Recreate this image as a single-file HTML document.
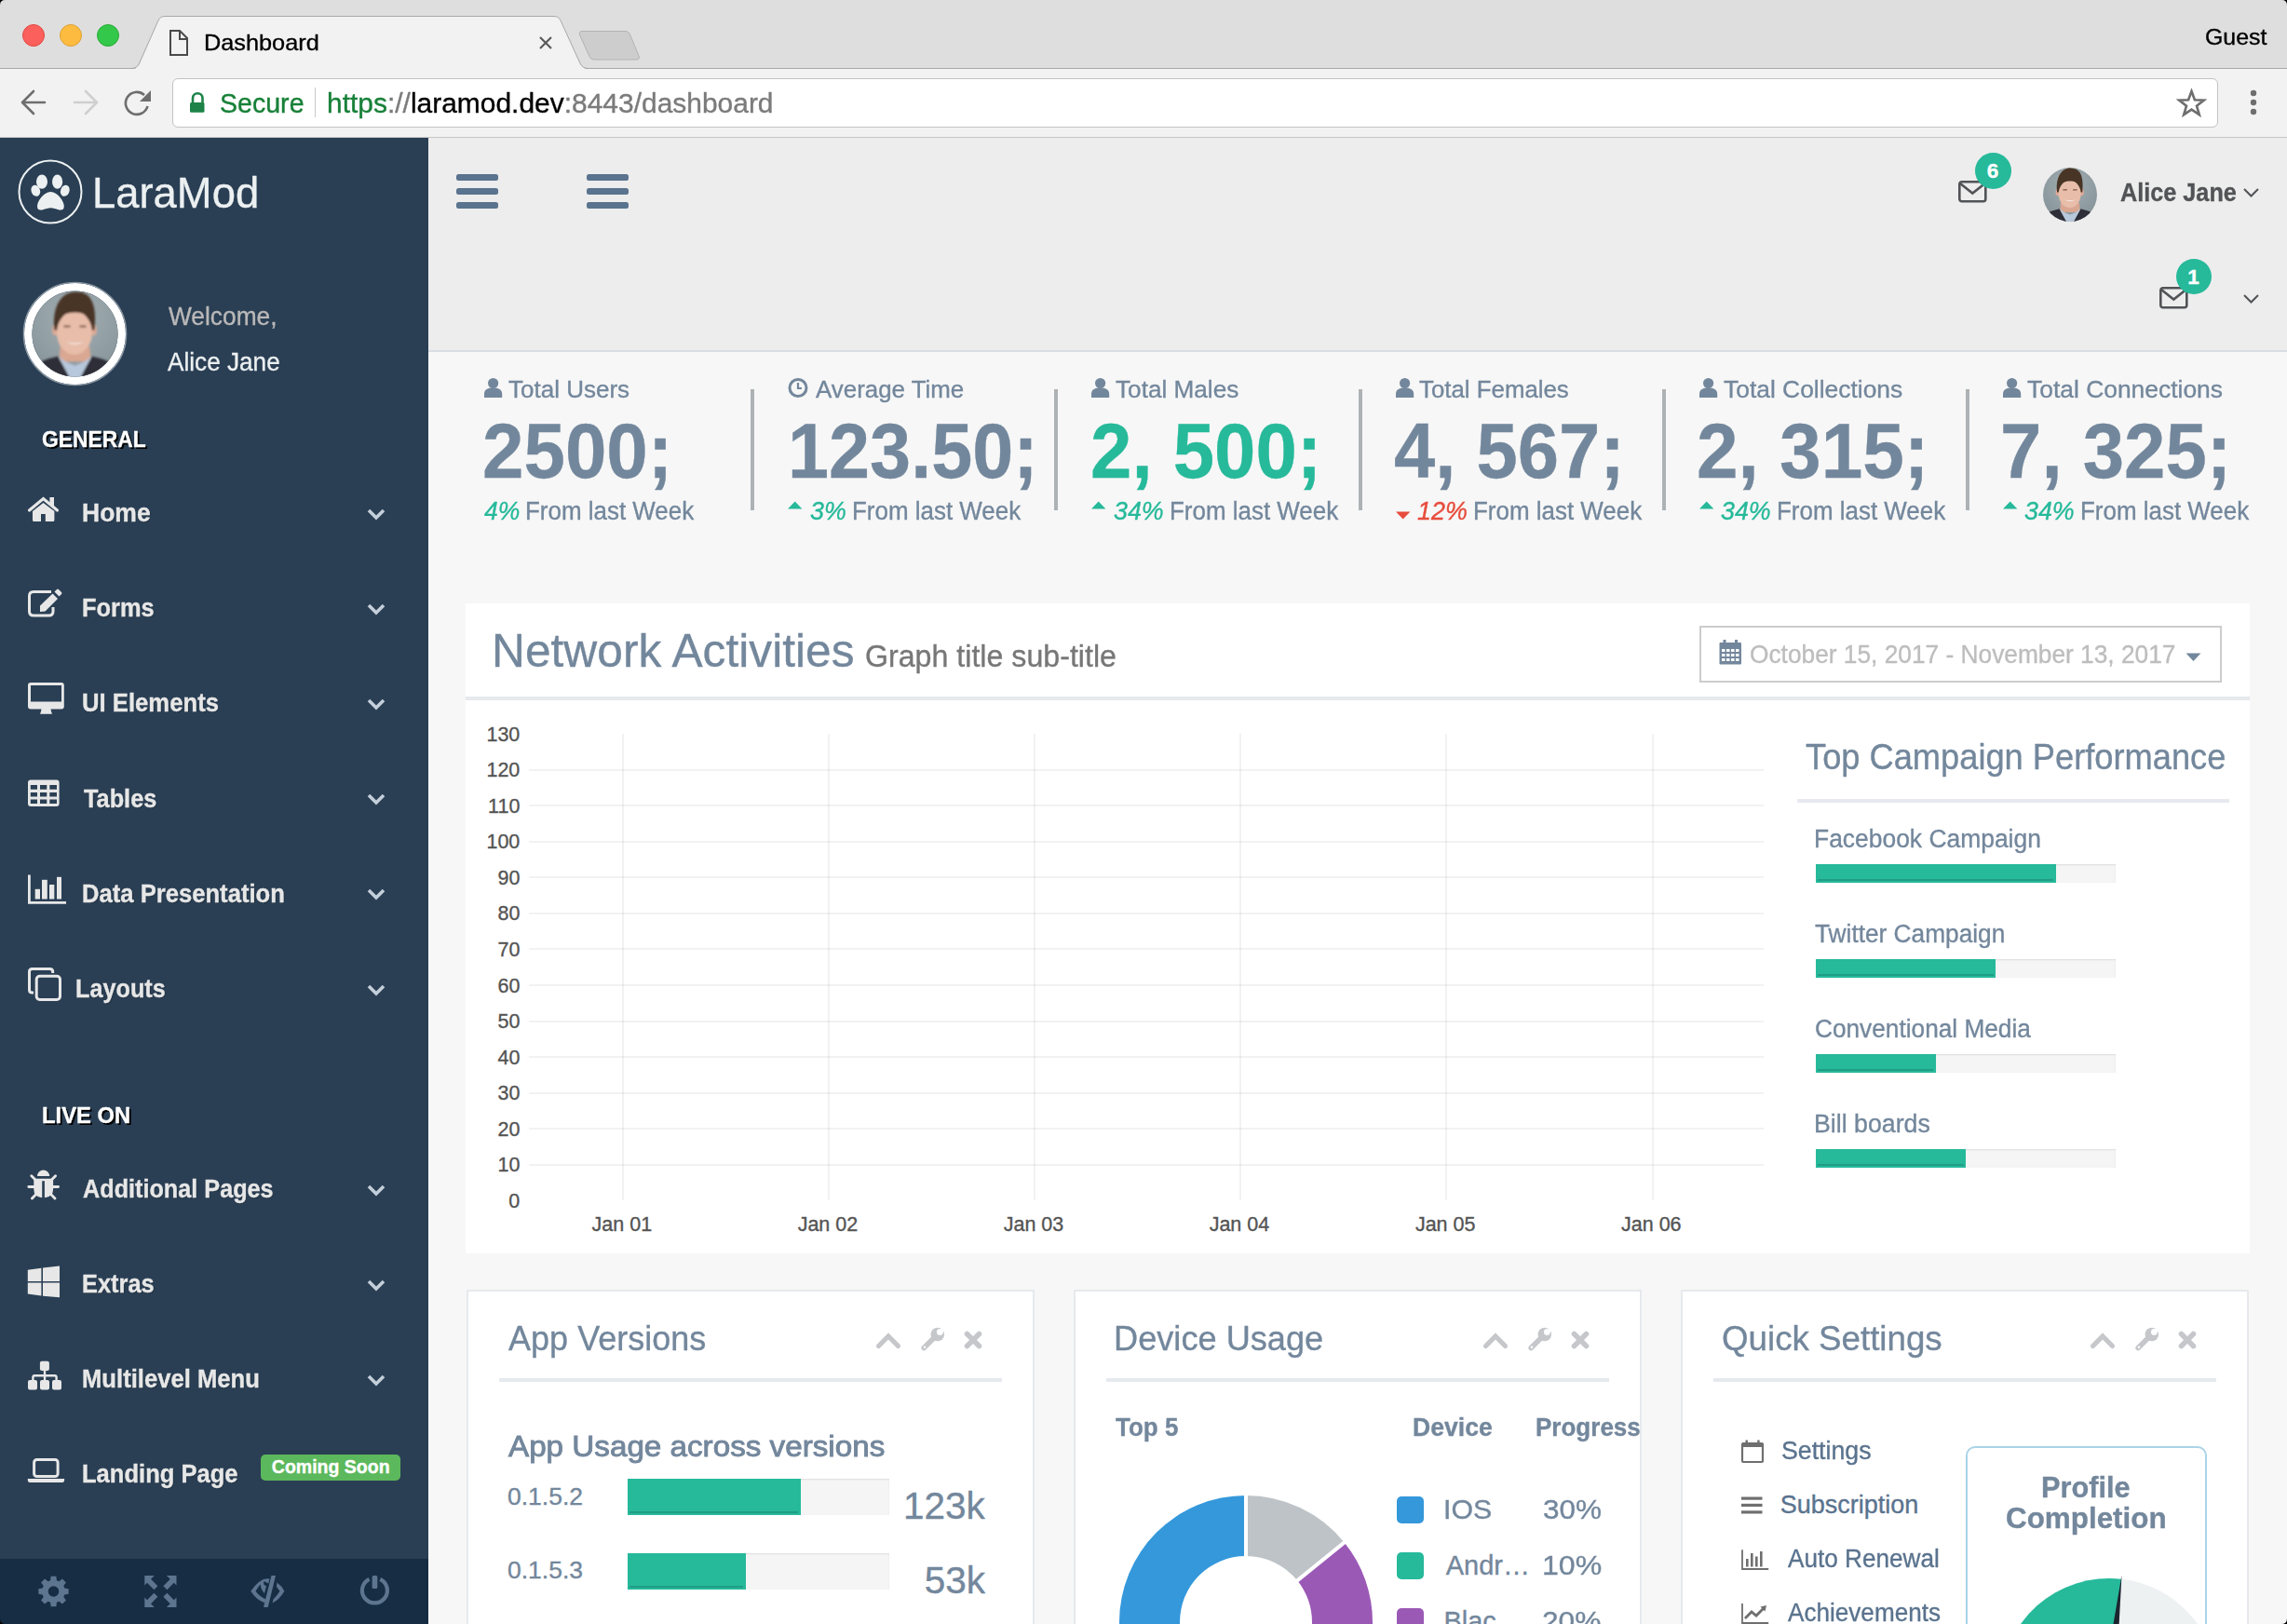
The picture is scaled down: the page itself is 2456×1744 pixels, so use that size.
<!DOCTYPE html>
<html><head><meta charset="utf-8"><title>Dashboard</title>
<style>
html,body{margin:0;padding:0;width:2456px;height:1744px;overflow:hidden;background:#F7F7F7}
body{position:relative;font-family:"Liberation Sans",sans-serif}
.abs{position:absolute}
.t{position:absolute;line-height:1;white-space:nowrap;-webkit-text-stroke:0.35px currentColor}
svg{overflow:visible}
</style></head><body>
<div class="abs" style="left:0;top:0;width:2456px;height:74px;background:#DEDEDE"></div><div class="abs" style="left:0;top:73px;width:2456px;height:1px;background:#A9A9A9"></div><div class="abs" style="left:0;top:74px;width:2456px;height:74px;background:#F2F2F2"></div><div class="abs" style="left:0;top:147px;width:2456px;height:1px;background:#C6C6C6"></div><svg class="abs" style="left:0;top:0" width="700" height="75">
<path d="M141,74.5 L144,74 Q148,73 150,69 L170,22 Q172,17.5 177,17.5 L595,17.5 Q600,17.5 602,22 L623,69 Q625,73 630,74 L700,74 L700,75 L0,75 L0,74 Z" fill="#F2F2F2"/>
<path d="M0,73.5 L141,73.5 Q147,73.5 149.5,68 L170,22 Q172,17.5 177,17.5 L595,17.5 Q600,17.5 602,22 L623,68 Q625.5,73.5 632,73.5 L700,73.5" fill="none" stroke="#A9A9A9" stroke-width="1"/>
<path d="M625,33.5 L672,33.5 Q675,33.5 676.5,37 L686,60 Q687.5,64 683.5,64 L637.5,64 Q634.5,64 633,60.5 L622.5,37.5 Q621.5,33.5 625,33.5 Z" fill="#CDCDCD" stroke="#B3B3B3" stroke-width="1"/>
<path d="M183,33 L193,33 L201,41 L201,59 L183,59 Z M193,33 L193,42 L201,42" fill="none" stroke="#4A4A4A" stroke-width="2"/>
<path d="M580,40 L592,52 M592,40 L580,52" stroke="#5A5A5A" stroke-width="2.2"/>
<circle cx="36" cy="38" r="11.5" fill="#FC605C" stroke="#E2463F" stroke-width="1"/>
<circle cx="76" cy="38" r="11.5" fill="#FDBC40" stroke="#DE9F34" stroke-width="1"/>
<circle cx="116" cy="38" r="11.5" fill="#34C84A" stroke="#27AA35" stroke-width="1"/>
</svg><div class="t" style="left:219.41px;top:33.50px;font-size:24px;color:#000;font-weight:400;font-style:normal;transform:scaleX(1.0537);transform-origin:0 0;">Dashboard</div><div class="t" style="left:2367.75px;top:28.00px;font-size:24px;color:#000;font-weight:400;font-style:normal;transform:scaleX(1.0377);transform-origin:0 0;">Guest</div><svg class="abs" style="left:0;top:74px" width="200" height="74">
<path d="M48,36 L25,36 M36,24 L24,36 L36,48" fill="none" stroke="#6E6E6E" stroke-width="2.6" stroke-linecap="round" stroke-linejoin="round"/>
<path d="M80,36 L103,36 M92,24 L104,36 L92,48" fill="none" stroke="#CFCFCF" stroke-width="2.6" stroke-linecap="round" stroke-linejoin="round"/>
<path d="M158.5,40 A12,12 0 1 1 155,28" fill="none" stroke="#6E6E6E" stroke-width="2.6"/>
<path d="M162,23 L162,35 L150,35 Z" fill="#6E6E6E"/>
</svg><div class="abs" style="left:185px;top:83.5px;width:2197px;height:53px;background:#fff;border:1px solid #C2C2C2;border-radius:6px;box-sizing:border-box"></div><svg class="abs" style="left:190px;top:90px" width="40" height="40">
<path d="M17,21 L17,15.5 A5.2,5.2 0 0 1 27.5,15.5 L27.5,21" fill="none" stroke="#1D8348" stroke-width="2.6"/>
<rect x="14" y="20" width="15.5" height="10.7" rx="1.5" fill="#1D8348"/>
</svg><div class="abs" style="left:338px;top:94px;width:1px;height:32px;background:#C8C8C8"></div><div class="t" style="left:235.71px;top:96.70px;font-size:29px;color:#188038;font-weight:400;font-style:normal;transform:scaleX(0.9852);transform-origin:0 0;">Secure</div><div class="t" style="left:350.90px;top:96.70px;font-size:29px;color:#000;font-weight:400;font-style:normal;transform:scaleX(1.0327);transform-origin:0 0;"><span style="color:#188038">https</span><span style="color:#7B7B7B">://</span><span style="color:#000">laramod.dev</span><span style="color:#7B7B7B">:8443/dashboard</span></div><svg class="abs" style="left:2330px;top:88px" width="110" height="44">
<path d="M23.5,10 L26.9,19.3 L36.8,19.6 L29,25.7 L31.8,35.2 L23.5,29.6 L15.2,35.2 L18,25.7 L10.2,19.6 L20.1,19.3 Z" fill="none" stroke="#6E6E6E" stroke-width="2.6" stroke-linejoin="miter"/>
<circle cx="90" cy="12" r="3.2" fill="#6E6E6E"/><circle cx="90" cy="22" r="3.2" fill="#6E6E6E"/><circle cx="90" cy="32" r="3.2" fill="#6E6E6E"/>
</svg><div class="abs" style="left:0;top:148px;width:460px;height:1596px;background:#2A3F54"></div><div class="abs" style="left:0;top:1674px;width:460px;height:70px;background:#172D44"></div><svg class="abs" style="left:0;top:148px" width="460" height="300">
<circle cx="54" cy="58" r="33.5" fill="none" stroke="#ECF0F1" stroke-width="2"/>
<g fill="#ECF0F1">
<ellipse cx="45" cy="47.2" rx="6" ry="7.6"/>
<ellipse cx="61.6" cy="47.2" rx="5.6" ry="7.6"/>
<ellipse cx="38.3" cy="56.8" rx="4.7" ry="6.2" transform="rotate(-20 38.3 56.8)"/>
<ellipse cx="69.8" cy="56.8" rx="4.7" ry="6.2" transform="rotate(20 69.8 56.8)"/>
<path d="M54.4,58 C47,58 40,68 40,73.5 C40,77.5 43,78 46,77.2 C49,76.3 51.5,75.2 54.4,75.2 C57.3,75.2 59.8,76.3 62.8,77.2 C65.8,78 68.8,77.5 68.8,73.5 C68.8,68 61.8,58 54.4,58 Z"/>
</g>
</svg><div class="t" style="left:98.75px;top:183.70px;font-size:46px;color:#ECF0F1;font-weight:400;font-style:normal;transform:scaleX(0.9868);transform-origin:0 0;">LaraMod</div><svg class="abs" style="left:22.5px;top:300.7px" width="115.0" height="115.0"><defs><clipPath id="cp80"><circle cx="57.5" cy="57.5" r="46"/></clipPath><radialGradient id="bg80" cx="0.5" cy="0.35" r="0.75"><stop offset="0" stop-color="#A3AFB3"/><stop offset="1" stop-color="#7E8C92"/></radialGradient><filter id="bl80" x="-10%" y="-10%" width="120%" height="120%"><feGaussianBlur stdDeviation="0.90"/></filter></defs><circle cx="57.5" cy="57.5" r="50.25" fill="none" stroke="#fff" stroke-width="8.5"/><circle cx="57.5" cy="57.5" r="55.1" fill="none" stroke="#8E9AA6" stroke-width="1.4"/><g clip-path="url(#cp80)"><rect x="0" y="0" width="115.0" height="115.0" fill="url(#bg80)"/><g transform="translate(57.5,57.5) scale(1.0000)" filter="url(#bl80)"><path d="M-16,14 L16,14 L17,30 L-17,30 Z" fill="#D9A792"/><path d="M-50,50 L-46,36 C-40,30 -30,27 -18,24 L-4,50 Z M50,50 L46,36 C40,30 30,27 18,24 L4,50 Z" fill="#2D2F37"/><path d="M-18,24 L-4,50 L4,50 L18,24 L10,30 L0,34 L-10,30 Z" fill="#B7C7DC"/><ellipse cx="-21" cy="-4" rx="3.5" ry="6" fill="#DDAA96"/><ellipse cx="20" cy="-4" rx="3.5" ry="6" fill="#DDAA96"/><path d="M-22,-4 C-25,-30 -14,-46 2,-45 C17,-45 24,-32 21,-4 Z" fill="#4A3527"/><ellipse cx="-0.5" cy="-1" rx="19" ry="23.5" fill="#E8BDA9"/><path d="M-19,-10 C-19,-22 -12,-28 0,-28 C12,-28 19,-22 19,-10 C16,-20 10,-23 0,-23 C-10,-23 -16,-20 -19,-10 Z" fill="#4A3527"/><path d="M-10,8 Q0,15 10,8 Q0,12 -10,8 Z" fill="#F4ECE6"/><path d="M-12,-8 L-5,-8 M5,-8 L12,-8" stroke="#7A5A48" stroke-width="2"/></g></g></svg><div class="t" style="left:180.87px;top:326.00px;font-size:27.5px;color:#BAB8B8;font-weight:400;font-style:normal;transform:scaleX(0.9568);transform-origin:0 0;">Welcome,</div><div class="t" style="left:180.43px;top:373.50px;font-size:28.5px;color:#ECF0F1;font-weight:400;font-style:normal;transform:scaleX(0.9180);transform-origin:0 0;">Alice Jane</div><div class="t" style="left:45.39px;top:461.00px;font-size:23px;color:#fff;font-weight:700;font-style:normal;transform:scaleX(0.9928);transform-origin:0 0;text-shadow:2px 2px 0 #000;">GENERAL</div><div class="t" style="left:44.69px;top:1186.50px;font-size:23px;color:#fff;font-weight:700;font-style:normal;transform:scaleX(1.0349);transform-origin:0 0;text-shadow:2px 2px 0 #000;">LIVE ON</div><div class="t" style="left:88.21px;top:538.00px;font-size:27px;color:#E7E7E7;font-weight:700;font-style:normal;transform:scaleX(0.9821);transform-origin:0 0;text-shadow:1px 1px 1px rgba(0,0,0,0.25);">Home</div><svg class="abs" style="left:393px;top:544.5px" width="22" height="16"><path d="M3,3 L11,11 L19,3" fill="none" stroke="#C4CFDA" stroke-width="3.6"/></svg><div class="t" style="left:88.28px;top:640.20px;font-size:27px;color:#E7E7E7;font-weight:700;font-style:normal;transform:scaleX(0.9424);transform-origin:0 0;text-shadow:1px 1px 1px rgba(0,0,0,0.25);">Forms</div><svg class="abs" style="left:393px;top:646.7px" width="22" height="16"><path d="M3,3 L11,11 L19,3" fill="none" stroke="#C4CFDA" stroke-width="3.6"/></svg><div class="t" style="left:88.46px;top:742.40px;font-size:27px;color:#E7E7E7;font-weight:700;font-style:normal;transform:scaleX(0.9512);transform-origin:0 0;text-shadow:1px 1px 1px rgba(0,0,0,0.25);">UI Elements</div><svg class="abs" style="left:393px;top:748.9px" width="22" height="16"><path d="M3,3 L11,11 L19,3" fill="none" stroke="#C4CFDA" stroke-width="3.6"/></svg><div class="t" style="left:89.75px;top:844.60px;font-size:27px;color:#E7E7E7;font-weight:700;font-style:normal;transform:scaleX(0.9373);transform-origin:0 0;text-shadow:1px 1px 1px rgba(0,0,0,0.25);">Tables</div><svg class="abs" style="left:393px;top:851.1px" width="22" height="16"><path d="M3,3 L11,11 L19,3" fill="none" stroke="#C4CFDA" stroke-width="3.6"/></svg><div class="t" style="left:88.27px;top:946.80px;font-size:27px;color:#E7E7E7;font-weight:700;font-style:normal;transform:scaleX(0.9490);transform-origin:0 0;text-shadow:1px 1px 1px rgba(0,0,0,0.25);">Data Presentation</div><svg class="abs" style="left:393px;top:953.3px" width="22" height="16"><path d="M3,3 L11,11 L19,3" fill="none" stroke="#C4CFDA" stroke-width="3.6"/></svg><div class="t" style="left:81.30px;top:1049.00px;font-size:27px;color:#E7E7E7;font-weight:700;font-style:normal;transform:scaleX(0.9346);transform-origin:0 0;text-shadow:1px 1px 1px rgba(0,0,0,0.25);">Layouts</div><svg class="abs" style="left:393px;top:1055.5px" width="22" height="16"><path d="M3,3 L11,11 L19,3" fill="none" stroke="#C4CFDA" stroke-width="3.6"/></svg><div class="t" style="left:89.37px;top:1264.00px;font-size:27px;color:#E7E7E7;font-weight:700;font-style:normal;transform:scaleX(0.9343);transform-origin:0 0;text-shadow:1px 1px 1px rgba(0,0,0,0.25);">Additional Pages</div><svg class="abs" style="left:393px;top:1270.5px" width="22" height="16"><path d="M3,3 L11,11 L19,3" fill="none" stroke="#C4CFDA" stroke-width="3.6"/></svg><div class="t" style="left:88.28px;top:1366.00px;font-size:27px;color:#E7E7E7;font-weight:700;font-style:normal;transform:scaleX(0.9416);transform-origin:0 0;text-shadow:1px 1px 1px rgba(0,0,0,0.25);">Extras</div><svg class="abs" style="left:393px;top:1372.5px" width="22" height="16"><path d="M3,3 L11,11 L19,3" fill="none" stroke="#C4CFDA" stroke-width="3.6"/></svg><div class="t" style="left:88.27px;top:1468.00px;font-size:27px;color:#E7E7E7;font-weight:700;font-style:normal;transform:scaleX(0.9497);transform-origin:0 0;text-shadow:1px 1px 1px rgba(0,0,0,0.25);">Multilevel Menu</div><svg class="abs" style="left:393px;top:1474.5px" width="22" height="16"><path d="M3,3 L11,11 L19,3" fill="none" stroke="#C4CFDA" stroke-width="3.6"/></svg><div class="t" style="left:88.27px;top:1570.00px;font-size:27px;color:#E7E7E7;font-weight:700;font-style:normal;transform:scaleX(0.9467);transform-origin:0 0;text-shadow:1px 1px 1px rgba(0,0,0,0.25);">Landing Page</div><div class="abs" style="left:280px;top:1562px;width:150px;height:28px;background:#5CB85C;border-radius:5px"></div><div class="t" style="left:291.82px;top:1566.00px;font-size:19.5px;color:#fff;font-weight:700;font-style:normal;">Coming Soon</div><div class="abs" style="left:460px;top:148px;width:1996px;height:228px;background:#EDEDED"></div><div class="abs" style="left:460px;top:376px;width:1996px;height:2px;background:#D9DEE4"></div><div class="abs" style="left:490px;top:186.7px;width:45px;height:7.5px;background:#5A738E;border-radius:2.5px"></div><div class="abs" style="left:490px;top:201.6px;width:45px;height:7.5px;background:#5A738E;border-radius:2.5px"></div><div class="abs" style="left:490px;top:216.6px;width:45px;height:7.5px;background:#5A738E;border-radius:2.5px"></div><div class="abs" style="left:630px;top:186.7px;width:45px;height:7.5px;background:#5A738E;border-radius:2.5px"></div><div class="abs" style="left:630px;top:201.6px;width:45px;height:7.5px;background:#5A738E;border-radius:2.5px"></div><div class="abs" style="left:630px;top:216.6px;width:45px;height:7.5px;background:#5A738E;border-radius:2.5px"></div><svg class="abs" style="left:2102.5px;top:194px" width="32" height="25"><rect x="1.3" y="1.3" width="28" height="21" rx="2.5" fill="none" stroke="#515356" stroke-width="2.6"/><path d="M2,3 L15.3,13.5 L28.6,3" fill="none" stroke="#515356" stroke-width="2.6"/></svg><div class="abs" style="left:2120.5px;top:163.5px;width:39px;height:39px;border-radius:50%;background:#26B99A"></div><div class="t" style="left:2133.76px;top:173.00px;font-size:22.5px;color:#fff;font-weight:700;font-style:normal;">6</div><svg class="abs" style="left:2191px;top:177px" width="64" height="64"><defs><clipPath id="cp2223"><circle cx="32" cy="32" r="29"/></clipPath><radialGradient id="bg2223" cx="0.5" cy="0.35" r="0.75"><stop offset="0" stop-color="#A3AFB3"/><stop offset="1" stop-color="#7E8C92"/></radialGradient><filter id="bl2223" x="-10%" y="-10%" width="120%" height="120%"><feGaussianBlur stdDeviation="0.57"/></filter></defs><g clip-path="url(#cp2223)"><rect x="0" y="0" width="64" height="64" fill="url(#bg2223)"/><g transform="translate(32,32) scale(0.6304)" filter="url(#bl2223)"><path d="M-16,14 L16,14 L17,30 L-17,30 Z" fill="#D9A792"/><path d="M-50,50 L-46,36 C-40,30 -30,27 -18,24 L-4,50 Z M50,50 L46,36 C40,30 30,27 18,24 L4,50 Z" fill="#2D2F37"/><path d="M-18,24 L-4,50 L4,50 L18,24 L10,30 L0,34 L-10,30 Z" fill="#B7C7DC"/><ellipse cx="-21" cy="-4" rx="3.5" ry="6" fill="#DDAA96"/><ellipse cx="20" cy="-4" rx="3.5" ry="6" fill="#DDAA96"/><path d="M-22,-4 C-25,-30 -14,-46 2,-45 C17,-45 24,-32 21,-4 Z" fill="#4A3527"/><ellipse cx="-0.5" cy="-1" rx="19" ry="23.5" fill="#E8BDA9"/><path d="M-19,-10 C-19,-22 -12,-28 0,-28 C12,-28 19,-22 19,-10 C16,-20 10,-23 0,-23 C-10,-23 -16,-20 -19,-10 Z" fill="#4A3527"/><path d="M-10,8 Q0,15 10,8 Q0,12 -10,8 Z" fill="#F4ECE6"/><path d="M-12,-8 L-5,-8 M5,-8 L12,-8" stroke="#7A5A48" stroke-width="2"/></g></g></svg><div class="t" style="left:2277.37px;top:193.00px;font-size:27.5px;color:#515356;font-weight:700;font-style:normal;transform:scaleX(0.9176);transform-origin:0 0;">Alice Jane</div><svg class="abs" style="left:2408px;top:200px" width="20" height="14"><path d="M2,3 L9.5,10.5 L17,3" fill="none" stroke="#515356" stroke-width="2"/></svg><svg class="abs" style="left:2318.5px;top:308.3px" width="32" height="25"><rect x="1.3" y="1.3" width="28" height="21" rx="2.5" fill="none" stroke="#515356" stroke-width="2.6"/><path d="M2,3 L15.3,13.5 L28.6,3" fill="none" stroke="#515356" stroke-width="2.6"/></svg><div class="abs" style="left:2336.75px;top:277.75px;width:38.5px;height:38.5px;border-radius:50%;background:#26B99A"></div><div class="t" style="left:2349.33px;top:287.00px;font-size:22.5px;color:#fff;font-weight:700;font-style:normal;">1</div><svg class="abs" style="left:2408px;top:314px" width="20" height="14"><path d="M2,3 L9.5,10.5 L17,3" fill="none" stroke="#515356" stroke-width="2"/></svg><svg class="abs" style="left:520.0px;top:405px" width="22" height="24"><circle cx="9.6" cy="6.5" r="5.6" fill="#73879C"/><path d="M0,22 L0,18 C0,13 4,11.5 9.6,11.5 C15,11.5 19.2,13 19.2,18 L19.2,22 Z" fill="#73879C"/></svg><div class="t" style="left:545.71px;top:404.50px;font-size:26.5px;color:#73879C;font-weight:400;font-style:normal;transform:scaleX(0.9814);transform-origin:0 0;">Total Users</div><div class="t" style="left:518.40px;top:443.00px;font-size:83px;color:#73879C;font-weight:700;font-style:normal;transform:scaleX(0.9629);transform-origin:0 0;">2500;</div><div class="t" style="left:519.80px;top:535.50px;font-size:27px;color:#26B99A;font-weight:400;font-style:italic;transform:scaleX(0.9823);transform-origin:0 0;">4%</div><div class="t" style="left:564.36px;top:535.50px;font-size:27px;color:#73879C;font-weight:400;font-style:normal;transform:scaleX(0.9608);transform-origin:0 0;">From last Week</div><div class="abs" style="left:806.2px;top:418px;width:4px;height:130px;background:#ADB2B5"></div><svg class="abs" style="left:846.2px;top:405px" width="24" height="24"><circle cx="11" cy="11.5" r="9" fill="none" stroke="#73879C" stroke-width="3"/><path d="M11,6 L11,12 L15,12" fill="none" stroke="#73879C" stroke-width="2.2"/></svg><div class="t" style="left:875.84px;top:404.50px;font-size:26.5px;color:#73879C;font-weight:400;font-style:normal;transform:scaleX(0.9766);transform-origin:0 0;">Average Time</div><div class="t" style="left:846.05px;top:443.00px;font-size:83px;color:#73879C;font-weight:700;font-style:normal;transform:scaleX(0.9542);transform-origin:0 0;">123.50;</div><svg class="abs" style="left:846.2px;top:538px" width="16" height="10"><path d="M0,8.5 L7.7,0.5 L15.4,8.5 Z" fill="#26B99A"/></svg><div class="t" style="left:869.60px;top:535.50px;font-size:27px;color:#26B99A;font-weight:400;font-style:italic;transform:scaleX(0.9930);transform-origin:0 0;">3%</div><div class="t" style="left:914.56px;top:535.50px;font-size:27px;color:#73879C;font-weight:400;font-style:normal;transform:scaleX(0.9608);transform-origin:0 0;">From last Week</div><div class="abs" style="left:1132.4px;top:418px;width:4px;height:130px;background:#ADB2B5"></div><svg class="abs" style="left:1172.4px;top:405px" width="22" height="24"><circle cx="9.6" cy="6.5" r="5.6" fill="#73879C"/><path d="M0,22 L0,18 C0,13 4,11.5 9.6,11.5 C15,11.5 19.2,13 19.2,18 L19.2,22 Z" fill="#73879C"/></svg><div class="t" style="left:1198.11px;top:404.50px;font-size:26.5px;color:#73879C;font-weight:400;font-style:normal;transform:scaleX(0.9872);transform-origin:0 0;">Total Males</div><div class="t" style="left:1170.61px;top:443.00px;font-size:83px;color:#26B99A;font-weight:700;font-style:normal;transform:scaleX(0.9614);transform-origin:0 0;">2, 500;</div><svg class="abs" style="left:1172.4px;top:538px" width="16" height="10"><path d="M0,8.5 L7.7,0.5 L15.4,8.5 Z" fill="#26B99A"/></svg><div class="t" style="left:1195.80px;top:535.50px;font-size:27px;color:#26B99A;font-weight:400;font-style:italic;transform:scaleX(0.9940);transform-origin:0 0;">34%</div><div class="t" style="left:1255.76px;top:535.50px;font-size:27px;color:#73879C;font-weight:400;font-style:normal;transform:scaleX(0.9608);transform-origin:0 0;">From last Week</div><div class="abs" style="left:1458.6px;top:418px;width:4px;height:130px;background:#ADB2B5"></div><svg class="abs" style="left:1498.6px;top:405px" width="22" height="24"><circle cx="9.6" cy="6.5" r="5.6" fill="#73879C"/><path d="M0,22 L0,18 C0,13 4,11.5 9.6,11.5 C15,11.5 19.2,13 19.2,18 L19.2,22 Z" fill="#73879C"/></svg><div class="t" style="left:1524.32px;top:404.50px;font-size:26.5px;color:#73879C;font-weight:400;font-style:normal;transform:scaleX(0.9747);transform-origin:0 0;">Total Females</div><div class="t" style="left:1497.31px;top:443.00px;font-size:83px;color:#73879C;font-weight:700;font-style:normal;transform:scaleX(0.9590);transform-origin:0 0;">4, 567;</div><svg class="abs" style="left:1498.6px;top:549px" width="16" height="10"><path d="M0,0.5 L7.7,8.5 L15.4,0.5 Z" fill="#E74C3C"/></svg><div class="t" style="left:1521.93px;top:535.50px;font-size:27px;color:#E74C3C;font-weight:400;font-style:italic;transform:scaleX(0.9953);transform-origin:0 0;">12%</div><div class="t" style="left:1581.96px;top:535.50px;font-size:27px;color:#73879C;font-weight:400;font-style:normal;transform:scaleX(0.9608);transform-origin:0 0;">From last Week</div><div class="abs" style="left:1784.8px;top:418px;width:4px;height:130px;background:#ADB2B5"></div><svg class="abs" style="left:1824.8px;top:405px" width="22" height="24"><circle cx="9.6" cy="6.5" r="5.6" fill="#73879C"/><path d="M0,22 L0,18 C0,13 4,11.5 9.6,11.5 C15,11.5 19.2,13 19.2,18 L19.2,22 Z" fill="#73879C"/></svg><div class="t" style="left:1850.51px;top:404.50px;font-size:26.5px;color:#73879C;font-weight:400;font-style:normal;transform:scaleX(0.9960);transform-origin:0 0;">Total Collections</div><div class="t" style="left:1821.50px;top:443.00px;font-size:83px;color:#73879C;font-weight:700;font-style:normal;transform:scaleX(0.9655);transform-origin:0 0;">2, 315;</div><svg class="abs" style="left:1824.8px;top:538px" width="16" height="10"><path d="M0,8.5 L7.7,0.5 L15.4,8.5 Z" fill="#26B99A"/></svg><div class="t" style="left:1848.20px;top:535.50px;font-size:27px;color:#26B99A;font-weight:400;font-style:italic;transform:scaleX(0.9940);transform-origin:0 0;">34%</div><div class="t" style="left:1908.16px;top:535.50px;font-size:27px;color:#73879C;font-weight:400;font-style:normal;transform:scaleX(0.9608);transform-origin:0 0;">From last Week</div><div class="abs" style="left:2111.0px;top:418px;width:4px;height:130px;background:#ADB2B5"></div><svg class="abs" style="left:2151.0px;top:405px" width="22" height="24"><circle cx="9.6" cy="6.5" r="5.6" fill="#73879C"/><path d="M0,22 L0,18 C0,13 4,11.5 9.6,11.5 C15,11.5 19.2,13 19.2,18 L19.2,22 Z" fill="#73879C"/></svg><div class="t" style="left:2176.71px;top:404.50px;font-size:26.5px;color:#73879C;font-weight:400;font-style:normal;transform:scaleX(0.9969);transform-origin:0 0;">Total Connections</div><div class="t" style="left:2147.61px;top:443.00px;font-size:83px;color:#73879C;font-weight:700;font-style:normal;transform:scaleX(0.9614);transform-origin:0 0;">7, 325;</div><svg class="abs" style="left:2151.0px;top:538px" width="16" height="10"><path d="M0,8.5 L7.7,0.5 L15.4,8.5 Z" fill="#26B99A"/></svg><div class="t" style="left:2174.40px;top:535.50px;font-size:27px;color:#26B99A;font-weight:400;font-style:italic;transform:scaleX(0.9940);transform-origin:0 0;">34%</div><div class="t" style="left:2234.36px;top:535.50px;font-size:27px;color:#73879C;font-weight:400;font-style:normal;transform:scaleX(0.9608);transform-origin:0 0;">From last Week</div><div class="abs" style="left:500px;top:648px;width:1916px;height:698px;background:#fff"></div><div class="abs" style="left:500px;top:748px;width:1916px;height:4px;background:#E6E9ED"></div><div class="t" style="left:527.60px;top:674.20px;font-size:50px;color:#73879C;font-weight:400;font-style:normal;transform:scaleX(0.9944);transform-origin:0 0;">Network Activities</div><div class="t" style="left:928.79px;top:688.20px;font-size:33px;color:#777;font-weight:400;font-style:normal;transform:scaleX(0.9748);transform-origin:0 0;">Graph title sub-title</div><div class="abs" style="left:1824.5px;top:672.3px;width:561px;height:61px;border:2px solid #CCC;box-sizing:border-box;background:#fff"></div><svg class="abs" style="left:1846px;top:686px" width="26" height="30">
<rect x="0.5" y="4" width="23.5" height="23.5" rx="1" fill="#73879C"/>
<rect x="4.5" y="1" width="3" height="6" fill="#73879C"/><rect x="17" y="1" width="3" height="6" fill="#73879C"/>
<g fill="#fff">
<rect x="3" y="11" width="3.5" height="3"/><rect x="8" y="11" width="3.5" height="3"/><rect x="13" y="11" width="3.5" height="3"/><rect x="18" y="11" width="3.5" height="3"/>
<rect x="3" y="16" width="3.5" height="3"/><rect x="8" y="16" width="3.5" height="3"/><rect x="13" y="16" width="3.5" height="3"/><rect x="18" y="16" width="3.5" height="3"/>
<rect x="3" y="21" width="3.5" height="3"/><rect x="8" y="21" width="3.5" height="3"/><rect x="13" y="21" width="3.5" height="3"/><rect x="18" y="21" width="3.5" height="3"/>
</g></svg><div class="t" style="left:1878.95px;top:689.00px;font-size:28px;color:#BDBDBD;font-weight:400;font-style:normal;transform:scaleX(0.9390);transform-origin:0 0;">October 15, 2017 - November 13, 2017</div><svg class="abs" style="left:2347px;top:700px" width="18" height="12"><path d="M0.5,1.5 L16.5,1.5 L8.5,10 Z" fill="#73879C"/></svg><div class="abs" style="left:568px;top:825.6px;width:1326px;height:2px;background:rgba(0,0,0,0.05)"></div><div class="abs" style="left:568px;top:864.1px;width:1326px;height:2px;background:rgba(0,0,0,0.05)"></div><div class="abs" style="left:568px;top:902.7px;width:1326px;height:2px;background:rgba(0,0,0,0.05)"></div><div class="abs" style="left:568px;top:941.2px;width:1326px;height:2px;background:rgba(0,0,0,0.05)"></div><div class="abs" style="left:568px;top:979.8px;width:1326px;height:2px;background:rgba(0,0,0,0.05)"></div><div class="abs" style="left:568px;top:1018.4px;width:1326px;height:2px;background:rgba(0,0,0,0.05)"></div><div class="abs" style="left:568px;top:1056.9px;width:1326px;height:2px;background:rgba(0,0,0,0.05)"></div><div class="abs" style="left:568px;top:1095.5px;width:1326px;height:2px;background:rgba(0,0,0,0.05)"></div><div class="abs" style="left:568px;top:1134.1px;width:1326px;height:2px;background:rgba(0,0,0,0.05)"></div><div class="abs" style="left:568px;top:1172.6px;width:1326px;height:2px;background:rgba(0,0,0,0.05)"></div><div class="abs" style="left:568px;top:1211.2px;width:1326px;height:2px;background:rgba(0,0,0,0.05)"></div><div class="abs" style="left:568px;top:1249.7px;width:1326px;height:2px;background:rgba(0,0,0,0.05)"></div><div class="abs" style="left:668.0px;top:788px;width:2px;height:501px;background:rgba(0,0,0,0.05)"></div><div class="abs" style="left:889.1px;top:788px;width:2px;height:501px;background:rgba(0,0,0,0.05)"></div><div class="abs" style="left:1110.2px;top:788px;width:2px;height:501px;background:rgba(0,0,0,0.05)"></div><div class="abs" style="left:1331.3px;top:788px;width:2px;height:501px;background:rgba(0,0,0,0.05)"></div><div class="abs" style="left:1552.4px;top:788px;width:2px;height:501px;background:rgba(0,0,0,0.05)"></div><div class="abs" style="left:1773.5px;top:788px;width:2px;height:501px;background:rgba(0,0,0,0.05)"></div><div class="t" style="left:522.46px;top:778.60px;font-size:21.5px;color:#545454;font-weight:400;font-style:normal;">130</div><div class="t" style="left:522.46px;top:817.16px;font-size:21.5px;color:#545454;font-weight:400;font-style:normal;">120</div><div class="t" style="left:524.07px;top:855.72px;font-size:21.5px;color:#545454;font-weight:400;font-style:normal;">110</div><div class="t" style="left:522.46px;top:894.28px;font-size:21.5px;color:#545454;font-weight:400;font-style:normal;">100</div><div class="t" style="left:534.44px;top:932.85px;font-size:21.5px;color:#545454;font-weight:400;font-style:normal;">90</div><div class="t" style="left:534.44px;top:971.41px;font-size:21.5px;color:#545454;font-weight:400;font-style:normal;">80</div><div class="t" style="left:534.44px;top:1009.97px;font-size:21.5px;color:#545454;font-weight:400;font-style:normal;">70</div><div class="t" style="left:534.44px;top:1048.53px;font-size:21.5px;color:#545454;font-weight:400;font-style:normal;">60</div><div class="t" style="left:534.44px;top:1087.09px;font-size:21.5px;color:#545454;font-weight:400;font-style:normal;">50</div><div class="t" style="left:534.44px;top:1125.65px;font-size:21.5px;color:#545454;font-weight:400;font-style:normal;">40</div><div class="t" style="left:534.44px;top:1164.22px;font-size:21.5px;color:#545454;font-weight:400;font-style:normal;">30</div><div class="t" style="left:534.44px;top:1202.78px;font-size:21.5px;color:#545454;font-weight:400;font-style:normal;">20</div><div class="t" style="left:534.44px;top:1241.34px;font-size:21.5px;color:#545454;font-weight:400;font-style:normal;">10</div><div class="t" style="left:546.37px;top:1279.90px;font-size:21.5px;color:#545454;font-weight:400;font-style:normal;">0</div><div class="t" style="left:635.57px;top:1305.10px;font-size:21.5px;color:#545454;font-weight:400;font-style:normal;">Jan 01</div><div class="t" style="left:856.67px;top:1305.10px;font-size:21.5px;color:#545454;font-weight:400;font-style:normal;">Jan 02</div><div class="t" style="left:1077.72px;top:1305.10px;font-size:21.5px;color:#545454;font-weight:400;font-style:normal;">Jan 03</div><div class="t" style="left:1298.66px;top:1305.10px;font-size:21.5px;color:#545454;font-weight:400;font-style:normal;">Jan 04</div><div class="t" style="left:1519.89px;top:1305.10px;font-size:21.5px;color:#545454;font-weight:400;font-style:normal;">Jan 05</div><div class="t" style="left:1741.02px;top:1305.10px;font-size:21.5px;color:#545454;font-weight:400;font-style:normal;">Jan 06</div><div class="t" style="left:1939.18px;top:794.30px;font-size:38.5px;color:#73879C;font-weight:400;font-style:normal;transform:scaleX(0.9417);transform-origin:0 0;">Top Campaign Performance</div><div class="abs" style="left:1930px;top:858px;width:464px;height:4px;background:#E6E9ED"></div><div class="t" style="left:1947.82px;top:888.40px;font-size:27px;color:#73879C;font-weight:400;font-style:normal;transform:scaleX(0.9787);transform-origin:0 0;">Facebook Campaign</div><div class="abs" style="left:1950px;top:928px;width:322px;height:20px;background:#F5F5F5;box-shadow:inset 0 1px 2px rgba(0,0,0,0.1)"></div><div class="abs" style="left:1950px;top:928px;width:257.6px;height:20px;background:#26B99A"></div><div class="abs" style="left:1952px;top:944px;width:253.1px;height:2px;background:rgba(0,0,0,0.15)"></div><div class="t" style="left:1949.41px;top:990.20px;font-size:27px;color:#73879C;font-weight:400;font-style:normal;transform:scaleX(0.9723);transform-origin:0 0;">Twitter Campaign</div><div class="abs" style="left:1950px;top:1030px;width:322px;height:20px;background:#F5F5F5;box-shadow:inset 0 1px 2px rgba(0,0,0,0.1)"></div><div class="abs" style="left:1950px;top:1030px;width:193.2px;height:20px;background:#26B99A"></div><div class="abs" style="left:1952px;top:1046px;width:188.7px;height:2px;background:rgba(0,0,0,0.15)"></div><div class="t" style="left:1948.69px;top:1092.00px;font-size:27px;color:#73879C;font-weight:400;font-style:normal;transform:scaleX(0.9716);transform-origin:0 0;">Conventional Media</div><div class="abs" style="left:1950px;top:1132px;width:322px;height:20px;background:#F5F5F5;box-shadow:inset 0 1px 2px rgba(0,0,0,0.1)"></div><div class="abs" style="left:1950px;top:1132px;width:128.8px;height:20px;background:#26B99A"></div><div class="abs" style="left:1952px;top:1148px;width:124.3px;height:2px;background:rgba(0,0,0,0.15)"></div><div class="t" style="left:1947.79px;top:1193.80px;font-size:27px;color:#73879C;font-weight:400;font-style:normal;transform:scaleX(0.9901);transform-origin:0 0;">Bill boards</div><div class="abs" style="left:1950px;top:1234px;width:322px;height:20px;background:#F5F5F5;box-shadow:inset 0 1px 2px rgba(0,0,0,0.1)"></div><div class="abs" style="left:1950px;top:1234px;width:161.0px;height:20px;background:#26B99A"></div><div class="abs" style="left:1952px;top:1250px;width:156.5px;height:2px;background:rgba(0,0,0,0.15)"></div><div class="abs" style="left:500.7px;top:1385px;width:610.3px;height:400px;background:#fff;border:2px solid #E6E9ED;box-sizing:border-box"></div><div class="t" style="left:545.91px;top:1419.00px;font-size:37.5px;color:#73879C;font-weight:400;font-style:normal;transform:scaleX(0.9610);transform-origin:0 0;">App Versions</div><div class="abs" style="left:535.7px;top:1480px;width:540.3px;height:4px;background:#E6E9ED"></div><svg class="abs" style="left:0;top:0" width="2456" height="1744"><path d="M943.5,1445.5 L954,1435 L964.5,1445.5" fill="none" stroke="#C5C7CB" stroke-width="5.2" stroke-linecap="round" stroke-linejoin="miter"/><mask id="wm941"><rect x="986.8" y="1413" width="40" height="40" fill="#fff"/><circle cx="1009.4" cy="1430.4" r="3.4" fill="#000"/><path d="M1009.4,1430.4 L1015.8,1421 L1019.8,1429 Z" fill="#000"/></mask><g mask="url(#wm941)"><circle cx="1006.8" cy="1433" r="7.3" fill="#C5C7CB"/></g><line x1="1003.8" y1="1436" x2="992.1999999999999" y2="1447.6" stroke="#C5C7CB" stroke-width="5.6" stroke-linecap="round"/><circle cx="993.0" cy="1446.8" r="1.2" fill="#fff"/><path d="M1038.5,1432.5 L1051.5,1445.5 M1051.5,1432.5 L1038.5,1445.5" stroke="#C5C7CB" stroke-width="5.6" stroke-linecap="round"/></svg><div class="abs" style="left:1153px;top:1385px;width:609.5999999999999px;height:400px;background:#fff;border:2px solid #E6E9ED;box-sizing:border-box"></div><div class="t" style="left:1196.32px;top:1419.00px;font-size:37.5px;color:#73879C;font-weight:400;font-style:normal;transform:scaleX(0.9648);transform-origin:0 0;">Device Usage</div><div class="abs" style="left:1188px;top:1480px;width:539.5999999999999px;height:4px;background:#E6E9ED"></div><svg class="abs" style="left:0;top:0" width="2456" height="1744"><path d="M1595.5,1445.5 L1606,1435 L1616.5,1445.5" fill="none" stroke="#C5C7CB" stroke-width="5.2" stroke-linecap="round" stroke-linejoin="miter"/><mask id="wm1593"><rect x="1638.8" y="1413" width="40" height="40" fill="#fff"/><circle cx="1661.3999999999999" cy="1430.4" r="3.4" fill="#000"/><path d="M1661.3999999999999,1430.4 L1667.8,1421 L1671.8,1429 Z" fill="#000"/></mask><g mask="url(#wm1593)"><circle cx="1658.8" cy="1433" r="7.3" fill="#C5C7CB"/></g><line x1="1655.8" y1="1436" x2="1644.2" y2="1447.6" stroke="#C5C7CB" stroke-width="5.6" stroke-linecap="round"/><circle cx="1645.0" cy="1446.8" r="1.2" fill="#fff"/><path d="M1690.5,1432.5 L1703.5,1445.5 M1703.5,1432.5 L1690.5,1445.5" stroke="#C5C7CB" stroke-width="5.6" stroke-linecap="round"/></svg><div class="abs" style="left:1805px;top:1385px;width:609.5999999999999px;height:400px;background:#fff;border:2px solid #E6E9ED;box-sizing:border-box"></div><div class="t" style="left:1849.26px;top:1419.00px;font-size:37.5px;color:#73879C;font-weight:400;font-style:normal;transform:scaleX(0.9791);transform-origin:0 0;">Quick Settings</div><div class="abs" style="left:1840px;top:1480px;width:539.5999999999999px;height:4px;background:#E6E9ED"></div><svg class="abs" style="left:0;top:0" width="2456" height="1744"><path d="M2247.5,1445.5 L2258,1435 L2268.5,1445.5" fill="none" stroke="#C5C7CB" stroke-width="5.2" stroke-linecap="round" stroke-linejoin="miter"/><mask id="wm2245"><rect x="2290.8" y="1413" width="40" height="40" fill="#fff"/><circle cx="2313.4" cy="1430.4" r="3.4" fill="#000"/><path d="M2313.4,1430.4 L2319.8,1421 L2323.8,1429 Z" fill="#000"/></mask><g mask="url(#wm2245)"><circle cx="2310.8" cy="1433" r="7.3" fill="#C5C7CB"/></g><line x1="2307.8" y1="1436" x2="2296.2000000000003" y2="1447.6" stroke="#C5C7CB" stroke-width="5.6" stroke-linecap="round"/><circle cx="2297.0" cy="1446.8" r="1.2" fill="#fff"/><path d="M2342.5,1432.5 L2355.5,1445.5 M2355.5,1432.5 L2342.5,1445.5" stroke="#C5C7CB" stroke-width="5.6" stroke-linecap="round"/></svg><div class="t" style="left:545.92px;top:1538.00px;font-size:31.5px;color:#73879C;font-weight:400;font-style:normal;transform:scaleX(1.0543);transform-origin:0 0;-webkit-text-stroke:0.9px #73879C;">App Usage across versions</div><div class="t" style="left:545.00px;top:1593.70px;font-size:26.5px;color:#73879C;font-weight:400;font-style:normal;">0.1.5.2</div><div class="abs" style="left:674px;top:1587.8px;width:281px;height:39px;background:#F5F5F5;box-shadow:inset 0 1px 2px rgba(0,0,0,0.1)"></div><div class="abs" style="left:674px;top:1587.8px;width:185.5px;height:39px;background:#26B99A"></div><div class="abs" style="left:676px;top:1622.8px;width:181.0px;height:2px;background:rgba(0,0,0,0.15)"></div><div class="t" style="left:969.95px;top:1597.00px;font-size:40.5px;color:#73879C;font-weight:400;font-style:normal;">123k</div><div class="t" style="left:545.01px;top:1673.20px;font-size:26.5px;color:#73879C;font-weight:400;font-style:normal;">0.1.5.3</div><div class="abs" style="left:674px;top:1667.7px;width:281px;height:39px;background:#F5F5F5;box-shadow:inset 0 1px 2px rgba(0,0,0,0.1)"></div><div class="abs" style="left:674px;top:1667.7px;width:126.5px;height:39px;background:#26B99A"></div><div class="abs" style="left:676px;top:1702.7px;width:122.0px;height:2px;background:rgba(0,0,0,0.15)"></div><div class="t" style="left:992.69px;top:1677.00px;font-size:40.5px;color:#73879C;font-weight:400;font-style:normal;">53k</div><div class="t" style="left:1197.54px;top:1519.80px;font-size:27px;color:#73879C;font-weight:700;font-style:normal;transform:scaleX(0.9625);transform-origin:0 0;">Top 5</div><div class="t" style="left:1516.91px;top:1519.80px;font-size:27px;color:#73879C;font-weight:700;font-style:normal;transform:scaleX(0.9845);transform-origin:0 0;">Device</div><div class="t" style="left:1648.64px;top:1519.80px;font-size:27px;color:#73879C;font-weight:700;font-style:normal;transform:scaleX(0.9637);transform-origin:0 0;">Progress</div><svg class="abs" style="left:0;top:0" width="2456" height="1744"><path d="M1338.00,1878.00 A136,136 0 0 1 1338.00,1606.00 L1338.00,1671.00 A71,71 0 0 0 1338.00,1813.00 Z" fill="#3498DB"/><path d="M1338.00,1606.00 A136,136 0 0 1 1443.69,1656.41 L1393.18,1697.32 A71,71 0 0 0 1338.00,1671.00 Z" fill="#BDC3C7"/><path d="M1443.69,1656.41 A136,136 0 0 1 1442.18,1829.42 L1392.39,1787.64 A71,71 0 0 0 1393.18,1697.32 Z" fill="#9B59B6"/><path d="M1442.18,1829.42 A136,136 0 0 1 1338.00,1878.00 L1338.00,1813.00 A71,71 0 0 0 1392.39,1787.64 Z" fill="#26B99A"/><line x1="1338.00" y1="1673.00" x2="1338.00" y2="1604.00" stroke="#fff" stroke-width="4"/><line x1="1391.62" y1="1698.58" x2="1445.25" y2="1655.15" stroke="#fff" stroke-width="4"/><line x1="1390.86" y1="1786.35" x2="1443.71" y2="1830.70" stroke="#fff" stroke-width="4"/><line x1="1338.00" y1="1811.00" x2="1338.00" y2="1880.00" stroke="#fff" stroke-width="4"/></svg><div class="abs" style="left:1500.3px;top:1607.3px;width:29px;height:29px;border-radius:5px;background:#3498DB"></div><div class="t" style="left:1550.00px;top:1607.30px;font-size:29px;color:#73879C;font-weight:400;font-style:normal;transform:scaleX(1.0443);transform-origin:0 0;">IOS</div><div class="t" style="left:1656.82px;top:1607.30px;font-size:29px;color:#73879C;font-weight:400;font-style:normal;transform:scaleX(1.0845);transform-origin:0 0;">30%</div><div class="abs" style="left:1500.3px;top:1667.3px;width:29px;height:29px;border-radius:5px;background:#26B99A"></div><div class="t" style="left:1552.73px;top:1667.30px;font-size:29px;color:#73879C;font-weight:400;font-style:normal;">Andr…</div><div class="t" style="left:1655.59px;top:1667.30px;font-size:29px;color:#73879C;font-weight:400;font-style:normal;transform:scaleX(1.1060);transform-origin:0 0;">10%</div><div class="abs" style="left:1500.3px;top:1727.3px;width:29px;height:29px;border-radius:5px;background:#9B59B6"></div><div class="t" style="left:1550.41px;top:1727.30px;font-size:29px;color:#73879C;font-weight:400;font-style:normal;">Blac…</div><div class="t" style="left:1656.42px;top:1727.30px;font-size:29px;color:#73879C;font-weight:400;font-style:normal;transform:scaleX(1.0916);transform-origin:0 0;">20%</div><div class="abs" style="left:2111px;top:1553px;width:258.5px;height:300px;border:2px solid #A9D4E8;border-radius:10px;box-sizing:border-box"></div><div class="t" style="left:2192.18px;top:1581.50px;font-size:31px;color:#73879C;font-weight:700;font-style:normal;transform:scaleX(0.9913);transform-origin:0 0;">Profile</div><div class="t" style="left:2153.69px;top:1615.00px;font-size:31px;color:#73879C;font-weight:700;font-style:normal;transform:scaleX(1.0125);transform-origin:0 0;">Completion</div><div class="t" style="left:1913.40px;top:1545.30px;font-size:27px;color:#5A738E;font-weight:400;font-style:normal;transform:scaleX(0.9898);transform-origin:0 0;">Settings</div><div class="t" style="left:1911.79px;top:1603.30px;font-size:27px;color:#5A738E;font-weight:400;font-style:normal;">Subscription</div><div class="t" style="left:1919.53px;top:1661.30px;font-size:27px;color:#5A738E;font-weight:400;font-style:normal;transform:scaleX(0.9684);transform-origin:0 0;">Auto Renewal</div><div class="t" style="left:1919.53px;top:1719.30px;font-size:27px;color:#5A738E;font-weight:400;font-style:normal;transform:scaleX(0.9671);transform-origin:0 0;">Achievements</div><svg class="abs" style="left:0;top:0" width="2456" height="1744"><path d="M2265,1811.6 L2148.4,1811.6 A116.6,116.6 0 0 1 2278.2,1695.7 Z" fill="#26B99A"/><path d="M2265,1811.6 L2278.2,1695.7 A116.6,116.6 0 0 1 2381.6,1811.6 Z" fill="#EEF1F2"/><path d="M2258,1811.6 L2278.5,1691.4 L2272,1811.6 Z" fill="#1C2430"/></svg><svg class="abs" style="left:0;top:0" width="460" height="1744"><path d="M31.5,548 L46.5,535.5 L61.5,548" fill="none" stroke="#E7E7E7" stroke-width="3.2" stroke-linecap="round"/>
<rect x="53.4" y="534" width="4.6" height="9" fill="#E7E7E7"/>
<path d="M35,549 L46.5,540 L58.4,549 L58.4,558.5 Q58.4,560 57,560 L48.8,560 L48.8,552 L44,552 L44,560 L36.4,560 Q35,560 35,558.5 Z" fill="#E7E7E7"/><path d="M55,635.5 L36,635.5 Q31.5,635.5 31.5,640 L31.5,656.5 Q31.5,661 36,661 L52.5,661 Q57,661 57,656.5 L57,652" fill="none" stroke="#E7E7E7" stroke-width="3"/>
<path d="M43,657 L43,650.5 L56.5,637.5 L62,643 L48.5,656.5 Z" fill="#E7E7E7"/>
<path d="M58.5,635.5 L61,633 Q62,632 63,633 L66,636 Q67,637 66,638 L63.5,640.5 Z" fill="#E7E7E7"/><path d="M33,733 L66,733 Q68.8,733 68.8,736 L68.8,758.5 Q68.8,761.4 66,761.4 L33,761.4 Q30,761.4 30,758.5 L30,736 Q30,733 33,733 Z M33,736 L33,753.4 L66,753.4 L66,736 Z" fill="#E7E7E7" fill-rule="evenodd"/>
<path d="M44.5,761 L54.5,761 L55,764 L56,766.7 L43,766.7 L44,764 Z" fill="#E7E7E7"/><path d="M33,837.6 L60.6,837.6 Q63.6,837.6 63.6,840.6 L63.6,863 Q63.6,866 60.6,866 L33,866 Q30,866 30,863 L30,840.6 Q30,837.6 33,837.6 Z
M32.8,843 L32.8,847.7 L40,847.7 L40,843 Z M43,843 L43,847.7 L50.3,847.7 L50.3,843 Z M53.3,843 L53.3,847.7 L61,847.7 L61,843 Z
M32.8,851 L32.8,855.5 L40,855.5 L40,851 Z M43,851 L43,855.5 L50.3,855.5 L50.3,851 Z M53.3,851 L53.3,855.5 L61,855.5 L61,851 Z
M32.8,858.5 L32.8,863 L40,863 L40,858.5 Z M43,858.5 L43,863 L50.3,863 L50.3,858.5 Z M53.3,858.5 L53.3,863 L61,863 L61,858.5 Z" fill="#E7E7E7" fill-rule="evenodd"/><path d="M30,939.4 L32.8,939.4 L32.8,968 L71,968 L71,970.8 L30,970.8 Z" fill="#E7E7E7"/>
<rect x="37.7" y="954.8" width="5.3" height="10.7" fill="#E7E7E7"/><rect x="45" y="944.8" width="5.8" height="20.7" fill="#E7E7E7"/>
<rect x="53" y="950" width="5.3" height="15.5" fill="#E7E7E7"/><rect x="61" y="941.8" width="5" height="23.7" fill="#E7E7E7"/><path d="M56.7,1045 L56.7,1043.5 Q56.7,1040.4 53.6,1040.4 L34.6,1040.4 Q31.5,1040.4 31.5,1043.5 L31.5,1063 Q31.5,1066 34.6,1066 L36,1066" fill="none" stroke="#E7E7E7" stroke-width="3"/>
<rect x="39.2" y="1048.3" width="25.3" height="25.2" rx="3.5" fill="none" stroke="#E7E7E7" stroke-width="3"/><path d="M40,1263.1 A6.6,6.6 0 0 1 53.2,1263.1 Z" fill="#E7E7E7"/>
<path d="M36.3,1265.7 L57.1,1265.7 L57.1,1277 Q57,1285 49,1286 L47.9,1286 L47.9,1268.3 L45.2,1268.3 L45.2,1286 L44,1286 Q36.4,1285 36.3,1277 Z" fill="#E7E7E7"/>
<path d="M33.8,1262.8 L38.5,1267.5 M59.6,1262.8 L54.9,1267.5 M30.8,1274.5 L37,1274.5 M62.6,1274.5 L56.4,1274.5 M34.4,1287 L39,1282.3 M59,1287 L54.4,1282.3" stroke="#E7E7E7" stroke-width="2.8" stroke-linecap="round"/><path d="M29.8,1363.8 L44.4,1361.8 L44.4,1376 L29.8,1376 Z M46,1361.6 L64,1359.5 L64,1376 L46,1376 Z M29.8,1377.6 L44.4,1377.6 L44.4,1391.6 L29.8,1389.6 Z M46,1377.6 L64,1377.6 L64,1393.2 L46,1391.8 Z" fill="#E7E7E7"/><rect x="42.9" y="1461.8" width="10" height="10.2" rx="2" fill="#E7E7E7"/>
<rect x="30" y="1482.1" width="10" height="10.4" rx="2" fill="#E7E7E7"/><rect x="43" y="1482.1" width="10" height="10.4" rx="2" fill="#E7E7E7"/><rect x="56" y="1482.1" width="10" height="10.4" rx="2" fill="#E7E7E7"/>
<path d="M48,1471 L48,1483 M35.4,1483 L35.4,1479 Q35.4,1477.2 37.2,1477.2 L58.8,1477.2 Q60.6,1477.2 60.6,1479 L60.6,1483" fill="none" stroke="#E7E7E7" stroke-width="2.4"/><rect x="36.6" y="1567.4" width="25.5" height="18.1" rx="3" fill="none" stroke="#E7E7E7" stroke-width="3"/>
<path d="M29.8,1587.9 L69.1,1587.9 L69.1,1589.5 Q69,1592.1 66,1592.1 L33,1592.1 Q29.9,1592.1 29.8,1589.5 Z" fill="#E7E7E7"/></svg><svg class="abs" style="left:0;top:0" width="460" height="1744">
<path d="M54.65,1692.85 L60.35,1692.85 L60.89,1697.18 L63.46,1698.24 L66.91,1695.57 L70.93,1699.59 L68.26,1703.04 L69.32,1705.61 L73.65,1706.15 L73.65,1711.85 L69.32,1712.39 L68.26,1714.96 L70.93,1718.41 L66.91,1722.43 L63.46,1719.76 L60.89,1720.82 L60.35,1725.15 L54.65,1725.15 L54.11,1720.82 L51.54,1719.76 L48.09,1722.43 L44.07,1718.41 L46.74,1714.96 L45.68,1712.39 L41.35,1711.85 L41.35,1706.15 L45.68,1705.61 L46.74,1703.04 L44.07,1699.59 L48.09,1695.57 L51.54,1698.24 L54.11,1697.18 Z M63.3,1709 A5.8,5.8 0 1 0 51.7,1709 A5.8,5.8 0 1 0 63.3,1709 Z" fill="#5E7590" fill-rule="evenodd"/>
<g fill="#5E7590">
<path d="M155.3,1692 L165.9,1692 L162,1695.8 L169.4,1703.2 L165.4,1707.2 L158,1699.8 L155.3,1702.6 Z"/>
<path d="M189.5,1692 L178.9,1692 L182.8,1695.8 L175.4,1703.2 L179.4,1707.2 L186.8,1699.8 L189.5,1702.6 Z"/>
<path d="M155.3,1726 L165.9,1726 L162,1722.2 L169.4,1714.8 L165.4,1710.8 L158,1718.2 L155.3,1715.4 Z"/>
<path d="M189.5,1726 L178.9,1726 L182.8,1722.2 L175.4,1714.8 L179.4,1710.8 L186.8,1718.2 L189.5,1715.4 Z"/>
</g>
<g fill="#5E7590">
<path d="M291.5,1692 L296,1692 L287.8,1726 L283,1726 Z"/>
<path d="M289.5,1695.5 Q280,1693.5 269.3,1708.8 Q275,1718 284.5,1721.5 L285.5,1717.5 Q278,1714 274.5,1708.8 Q278,1703 280,1701.5 Q279.5,1706 284,1711 L286,1703 Q282,1702.5 283.5,1698 L288.2,1700.5 Z"/>
<path d="M297.5,1699.5 Q302.5,1703 305.4,1708.8 Q300,1718 292.5,1721.5 L293.5,1717.5 Q298,1713 300.5,1708.8 Q298.5,1706 297,1704 Z"/>
</g>
<path d="M396.5,1695.8 A13.5,13.5 0 1 0 408.3,1695.8" fill="none" stroke="#5E7590" stroke-width="4.2"/>
<rect x="399.6" y="1692" width="5.7" height="14" rx="1.5" fill="#5E7590"/>
</svg><svg class="abs" style="left:0;top:0" width="2456" height="1744">
<rect x="1871" y="1550" width="22" height="20" rx="1" fill="none" stroke="#6F6F6F" stroke-width="2.2"/>
<rect x="1871" y="1550" width="22" height="4" fill="#6F6F6F"/>
<rect x="1874.5" y="1546.5" width="2.4" height="5" fill="#6F6F6F"/><rect x="1887.2" y="1546.5" width="2.4" height="5" fill="#6F6F6F"/>
<rect x="1870" y="1607.5" width="22.5" height="3.2" fill="#6F6F6F"/><rect x="1870" y="1614.8" width="22.5" height="3.2" fill="#6F6F6F"/><rect x="1870" y="1622.3" width="22.5" height="3.2" fill="#6F6F6F"/>
<path d="M1871,1664.3 L1871,1685 L1899.2,1685" fill="none" stroke="#6F6F6F" stroke-width="1.8"/>
<rect x="1875" y="1674" width="2.6" height="8.5" fill="#6F6F6F"/><rect x="1880" y="1668" width="2.6" height="14.5" fill="#6F6F6F"/><rect x="1885" y="1671.5" width="2.6" height="11" fill="#6F6F6F"/><rect x="1890" y="1666" width="2.6" height="16.5" fill="#6F6F6F"/>
<path d="M1871,1722 L1871,1743 L1899.2,1743" fill="none" stroke="#6F6F6F" stroke-width="1.8"/>
<path d="M1874,1738 L1881,1731 L1886,1735 L1894,1727" fill="none" stroke="#6F6F6F" stroke-width="2.8"/>
<path d="M1890.5,1725.5 L1897,1724 L1895.5,1730.5 Z" fill="#6F6F6F"/>
</svg><svg class="abs" style="left:0;top:0" width="2456" height="1744"><path d="M0,0 L5.5,0 Q0,0 0,5.5 Z" fill="#000"/><path d="M2456,0 L2450.5,0 Q2456,0 2456,5.5 Z" fill="#000"/><path d="M0,1744 L0,1738 Q0,1744 6,1744 Z" fill="#000"/><path d="M2456,1744 L2456,1738 Q2456,1744 2450,1744 Z" fill="#000"/></svg>
</body></html>
